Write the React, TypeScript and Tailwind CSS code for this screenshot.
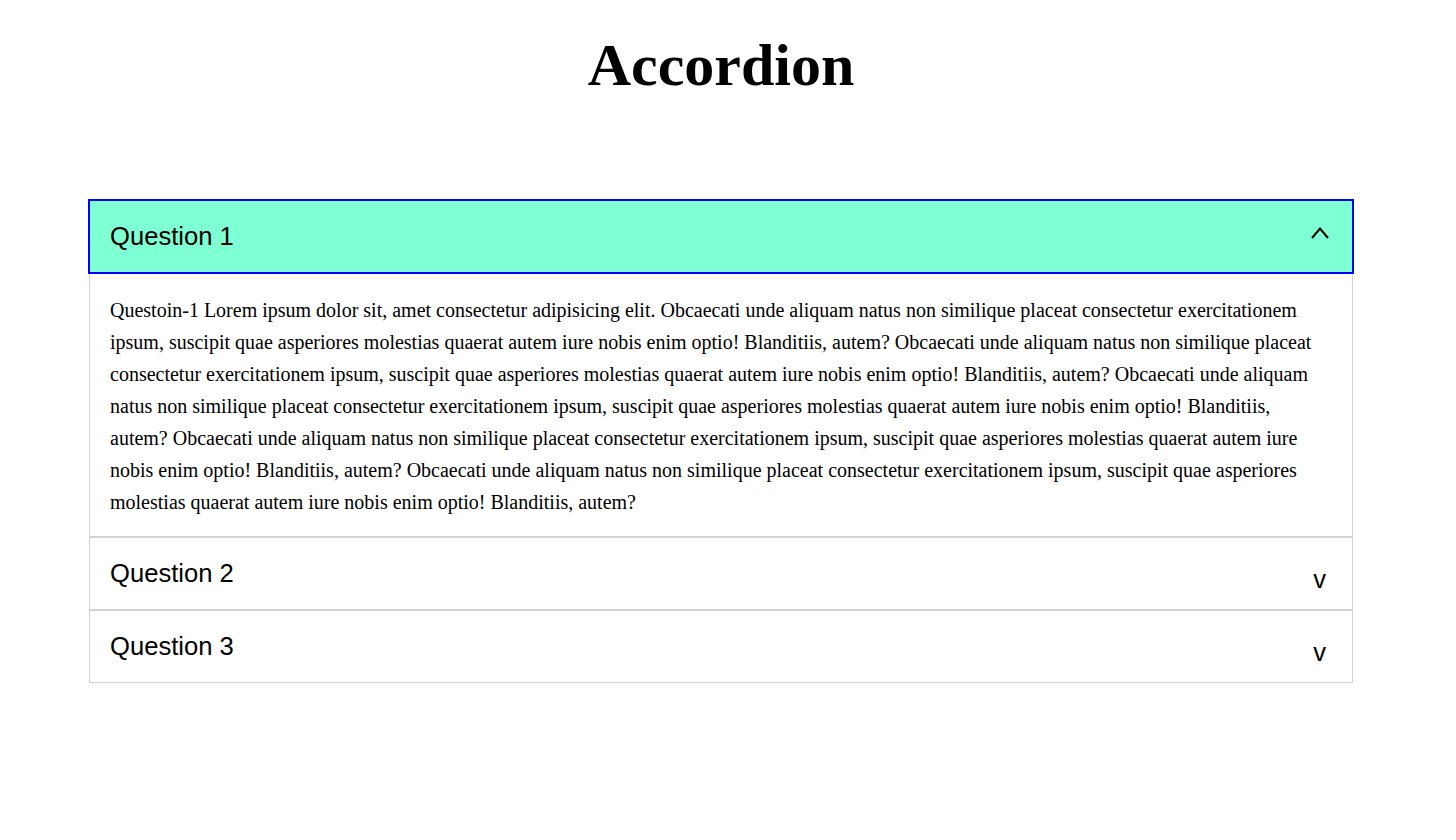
import { useState } from "react";

const body =
  "Questoin-1 Lorem ipsum dolor sit, amet consectetur adipisicing elit. Obcaecati unde aliquam natus non similique placeat consectetur exercitationem ipsum, suscipit quae asperiores molestias quaerat autem iure nobis enim optio! Blanditiis, autem? Obcaecati unde aliquam natus non similique placeat consectetur exercitationem ipsum, suscipit quae asperiores molestias quaerat autem iure nobis enim optio! Blanditiis, autem? Obcaecati unde aliquam natus non similique placeat consectetur exercitationem ipsum, suscipit quae asperiores molestias quaerat autem iure nobis enim optio! Blanditiis, autem? Obcaecati unde aliquam natus non similique placeat consectetur exercitationem ipsum, suscipit quae asperiores molestias quaerat autem iure nobis enim optio! Blanditiis, autem? Obcaecati unde aliquam natus non similique placeat consectetur exercitationem ipsum, suscipit quae asperiores molestias quaerat autem iure nobis enim optio! Blanditiis, autem?";

const items = [
  { title: "Question 1", text: body },
  { title: "Question 2", text: body.replace("Questoin-1", "Questoin-2") },
  { title: "Question 3", text: body.replace("Questoin-1", "Questoin-3") },
];

const UpArrow = () => (
  <svg width="18" height="12" viewBox="0 0 18 12" className="mb-[8px] mr-[1px]">
    <polyline points="1,11 9,1.5 17,11" fill="none" stroke="#000" strokeWidth="2" />
  </svg>
);

const App = () => {
  const [open, setOpen] = useState(0);

  return (
    <div className="min-h-screen bg-white">
      <div className="w-[1442px]">
        <h1 className="mt-[28px] text-center text-[60px] leading-[74px] font-bold text-black font-['Liberation_Serif',serif]">
          Accordion
        </h1>
        <div className="mx-auto mt-[98px] w-[1264px]">
          {items.map((item, i) => (
            <div key={item.title} className="border border-[#d3d3d3]">
              <button
                onClick={() => setOpen(open === i ? -1 : i)}
                className={
                  open === i
                    ? "flex h-[71px] w-full items-center justify-between bg-[#7fffd4] pl-[20px] pr-[22px] text-left outline-2 outline-solid outline-[#0000ff]"
                    : "flex h-[71px] w-full items-center justify-between bg-white pl-[20px] pr-[22px] text-left"
                }
              >
                <span className="text-[25.6px] text-black font-['Liberation_Sans',Arial,sans-serif]">
                  {item.title}
                </span>
                {open === i ? (
                  <UpArrow />
                ) : (
                  <span className="mr-[4px] mt-[12px] text-[25.6px] leading-none text-black font-['Liberation_Sans',Arial,sans-serif]">
                    v
                  </span>
                )}
              </button>
              {open === i && (
                <div className="px-[20px] pt-[22px] pb-[18px] text-[20px] leading-[32px] text-black font-['Liberation_Serif',serif]">
                  {item.text}
                </div>
              )}
            </div>
          ))}
        </div>
      </div>
    </div>
  );
};

export default App;
